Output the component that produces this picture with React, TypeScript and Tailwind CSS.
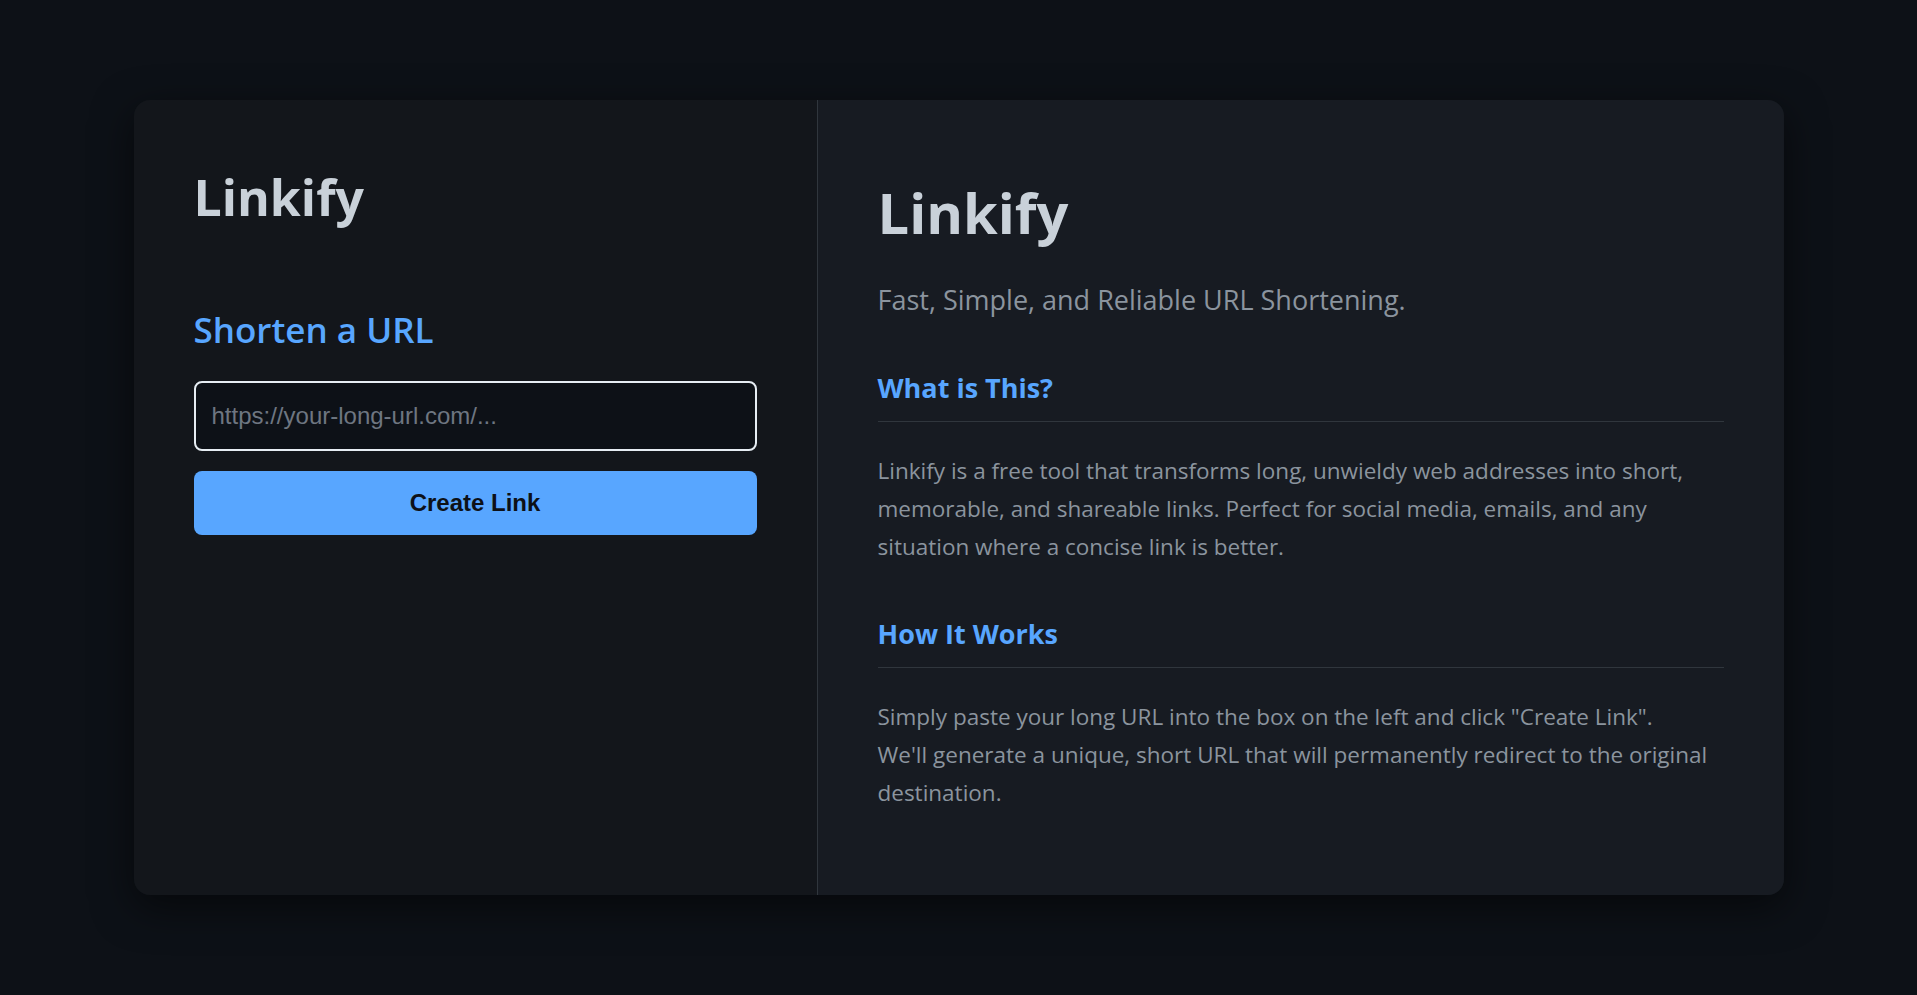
import { useState } from "react";

const App = () => {
  const [url, setUrl] = useState("");

  return (
    <main
      className="w-full h-screen bg-[#0d1117] flex items-center justify-center"
      style={{ fontFamily: '"Open Sans", "Noto Sans", sans-serif' }}
    >
      <div className="w-[1650px] h-[795px] flex flex-row rounded-2xl overflow-hidden shadow-[0_12px_40px_rgba(0,0,0,0.55)]">
        {/* panel izquierdo: formulario */}
        <section className="w-[684px] shrink-0 h-full bg-[#13161b] border-r border-[#30363d] px-[60px] pt-[67px] flex flex-col">
          <h1 className="text-[50px] leading-[1.2] font-bold text-[#c9d1d9]">
            Linkify
          </h1>

          <h2 className="mt-[80px] text-[35px] leading-[1.3] font-semibold text-[#58a6ff]">
            Shorten a URL
          </h2>

          <div className="mt-[28px] flex flex-col gap-5">
            <input
              type="text"
              autoFocus
              value={url}
              onChange={(e) => setUrl(e.target.value)}
              placeholder="https://your-long-url.com/..."
              className="w-full h-[70px] px-[16px] rounded-lg bg-[#0d1117] border-2 border-[#e6edf3] text-[24px] text-[#c9d1d9] placeholder:text-[#6e7681] outline-none"
              style={{ fontFamily: '"Liberation Sans", Arial, sans-serif' }}
            />
            <button
              className="w-full h-[64px] rounded-lg bg-[#58a6ff] text-[#0d1117] text-[24px] font-bold"
              style={{ fontFamily: '"Liberation Sans", Arial, sans-serif' }}
            >
              Create Link
            </button>
          </div>
        </section>

        {/* panel derecho: informacion */}
        <section className="flex-1 h-full bg-[#171b22] px-[60px] pb-[4px] flex flex-col justify-center">
          <h1 className="text-[56px] leading-[1.2] font-bold text-[#c9d1d9]">
            Linkify
          </h1>
          <p className="mt-[34px] text-[27px] leading-[1.5] text-[#8b949e]">
            Fast, Simple, and Reliable URL Shortening.
          </p>

          <h2 className="mt-[50px] pb-[16px] border-b border-[#30363d] text-[27px] leading-[1.3] font-bold text-[#58a6ff]">
            What is This?
          </h2>
          <p className="mt-[30px] text-[22.5px] leading-[38px] text-[#8b949e]">
            Linkify is a free tool that transforms long, unwieldy web addresses
            into short,
            <br />
            memorable, and shareable links. Perfect for social media, emails,
            and any
            <br />
            situation where a concise link is better.
          </p>

          <h2 className="mt-[50px] pb-[16px] border-b border-[#30363d] text-[27px] leading-[1.3] font-bold text-[#58a6ff]">
            How It Works
          </h2>
          <p className="mt-[30px] text-[22.5px] leading-[38px] text-[#8b949e]">
            Simply paste your long URL into the box on the left and click
            "Create Link".
            <br />
            We'll generate a unique, short URL that will permanently redirect
            to the original
            <br />
            destination.
          </p>
        </section>
      </div>
    </main>
  );
};

export default App;
